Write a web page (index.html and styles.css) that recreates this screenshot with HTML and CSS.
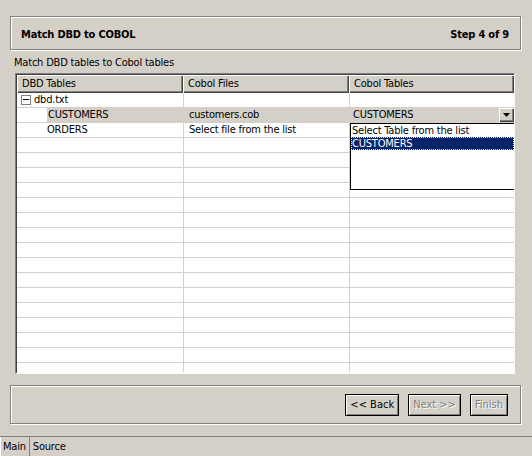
FILE: index.html
```html
<!DOCTYPE html>
<html lang="en">
<head>
  <meta charset="UTF-8">
  <title>Match DBD to COBOL</title>
  <link rel="stylesheet" href="styles.css">
</head>
<body>
  <div class="wizard">
    <div class="step-header">
      <span>Match DBD to COBOL</span>
      <span>Step 4 of 9</span>
    </div>
    <div class="subtitle">Match DBD tables to Cobol tables</div>

    <div class="table-wrap">
      <div class="table">
        <div class="head">
          <div class="hcell">DBD Tables</div>
          <div class="hcell">Cobol Files</div>
          <div class="hcell">Cobol Tables</div>
        </div>
        <div class="rows">
          <div class="row">
            <div class="cell tree"><span class="minus"></span>dbd.txt</div>
            <div class="cell"></div>
            <div class="cell"></div>
          </div>
          <div class="row active">
            <div class="cell leaf"><span class="sel">CUSTOMERS</span></div>
            <div class="cell">customers.cob</div>
            <div class="cell combo">
              <span>CUSTOMERS</span>
              <span class="combo-btn"><svg width="7" height="4" viewBox="0 0 7 4"><path d="M0 0h7L3.5 4z" fill="#000"/></svg></span>
            </div>
          </div>
          <div class="row">
            <div class="cell leaf">ORDERS</div>
            <div class="cell">Select file from the list</div>
            <div class="cell"></div>
          </div>
          <div class="row"><div class="cell"></div><div class="cell"></div><div class="cell"></div></div>
          <div class="row"><div class="cell"></div><div class="cell"></div><div class="cell"></div></div>
          <div class="row"><div class="cell"></div><div class="cell"></div><div class="cell"></div></div>
          <div class="row"><div class="cell"></div><div class="cell"></div><div class="cell"></div></div>
          <div class="row"><div class="cell"></div><div class="cell"></div><div class="cell"></div></div>
          <div class="row"><div class="cell"></div><div class="cell"></div><div class="cell"></div></div>
          <div class="row"><div class="cell"></div><div class="cell"></div><div class="cell"></div></div>
          <div class="row"><div class="cell"></div><div class="cell"></div><div class="cell"></div></div>
          <div class="row"><div class="cell"></div><div class="cell"></div><div class="cell"></div></div>
          <div class="row"><div class="cell"></div><div class="cell"></div><div class="cell"></div></div>
          <div class="row"><div class="cell"></div><div class="cell"></div><div class="cell"></div></div>
          <div class="row"><div class="cell"></div><div class="cell"></div><div class="cell"></div></div>
          <div class="row"><div class="cell"></div><div class="cell"></div><div class="cell"></div></div>
          <div class="row"><div class="cell"></div><div class="cell"></div><div class="cell"></div></div>
          <div class="row"><div class="cell"></div><div class="cell"></div><div class="cell"></div></div>
          <div class="row"><div class="cell"></div><div class="cell"></div><div class="cell"></div></div>
        </div>
        <div class="popup">
          <div class="opt">Select Table from the list</div>
          <div class="opt picked">CUSTOMERS</div>
        </div>
      </div>
    </div>

    <div class="button-bar">
      <button class="btn">&lt;&lt; Back</button>
      <button class="btn" disabled>Next &gt;&gt;</button>
      <button class="btn" disabled>Finish</button>
    </div>
  </div>

  <div class="tabs">
    <div class="tab current">Main</div>
    <div class="tab">Source</div>
  </div>
</body>
</html>
```

FILE: styles.css
```css
html, body {
  margin: 0;
  width: 532px;
  height: 456px;
  overflow: hidden;
  background: #d4d0c8;
  font-family: "DejaVu Sans Condensed", "DejaVu Sans", sans-serif;
  font-size: 11px;
  letter-spacing: -0.2px;
  color: #000;
}

.wizard {
  padding: 16px 11px 0 10px;
}

/* etched boxes */
.step-header,
.button-bar {
  border: 1px solid #808080;
  box-shadow: inset 1px 1px 0 #fff, 1px 1px 0 #fff;
}

.step-header {
  height: 30px;
  display: flex;
  justify-content: space-between;
  align-items: center;
  padding: 2px 11px 0 10px;
  font-weight: bold;
}

.subtitle {
  padding: 6px 0 0 4px;
  height: 17px;
  line-height: 14px;
}

.table-wrap {
  margin-left: 5px;
  width: 497px;
  height: 298px;
  border-top: 1px solid #808080;
  border-left: 1px solid #808080;
  border-right: 1px solid #fff;
  border-bottom: 1px solid #fff;
  box-shadow: inset 1px 1px 0 #404040;
  padding: 1px 0 0 1px;
  background: #fff;
}

.table {
  position: relative;
  height: 297px;
  overflow: hidden;
}

.head {
  display: grid;
  grid-template-columns: 166px 166px 165px;
  height: 18px;
  background: #d4d0c8;
}

.hcell {
  line-height: 17px;
  padding-left: 5px;
  box-shadow: inset 1px 1px 0 #fff, inset -1px -1px 0 #404040, inset -2px -2px 0 #808080;
  white-space: nowrap;
}

.row {
  display: grid;
  grid-template-columns: 167px 166px 165px;
  height: 14px;
  border-bottom: 1px solid #d4d0c8;
}

.cell {
  line-height: 14px;
  padding-left: 5px;
  border-right: 1px solid #d4d0c8;
  white-space: nowrap;
  position: relative;
}

.cell:last-child {
  border-right: none;
}

.row.active .cell {
  background: #d4d0c8;
}

.row.active .cell.leaf {
  background: #fff;
}

.tree {
  display: flex;
  align-items: center;
  padding-left: 4px;
}

.minus {
  width: 8px;
  height: 8px;
  border: 1px solid #808080;
  margin-right: 3px;
  position: relative;
  background: #fff;
}

.minus::after {
  content: "";
  position: absolute;
  left: 1px;
  right: 1px;
  top: 3px;
  height: 1px;
  background: #000;
}

.leaf {
  padding-left: 30px;
}

.sel {
  display: block;
  background: #d4d0c8;
  padding-left: 1px;
  margin-right: -1px;
}

.combo {
  padding-left: 3px;
}

.combo-btn {
  position: absolute;
  right: 1px;
  top: 0;
  width: 15px;
  height: 14px;
  display: flex;
  align-items: center;
  justify-content: center;
  background: #d4d0c8;
  box-shadow: inset 1px 1px 0 #fff, inset -1px -1px 0 #404040, inset -2px -2px 0 #808080;
}

.popup {
  position: absolute;
  left: 333px;
  top: 48px;
  width: 163px;
  height: 65px;
  border: 1px solid #000;
  background: #fff;
}

.opt {
  height: 13px;
  line-height: 13px;
  padding-left: 1px;
  white-space: nowrap;
}

.picked {
  background: #0a246a;
  color: #fff;
  outline: 1px dotted #f0e8b0;
  outline-offset: -1px;
}

.button-bar {
  margin-top: 11px;
  height: 37px;
  display: flex;
  justify-content: flex-end;
  align-items: center;
  gap: 9px;
  padding-right: 12px;
}

.btn {
  font: inherit;
  height: 22px;
  padding: 0 4px;
  background: #d4d0c8;
  border: 1px solid #000;
  box-shadow: inset 1px 1px 0 #fff, inset -1px -1px 0 #808080;
  color: #000;
  margin: 0;
}

.btn:disabled {
  color: #808080;
  text-shadow: 1px 1px 0 #fff;
}

.tabs {
  position: absolute;
  left: 0;
  top: 436px;
  width: 532px;
  height: 20px;
  border-top: 1px solid #808080;
  display: flex;
}

.tab {
  line-height: 19px;
  padding: 0 3px;
}

.tab.current {
  box-shadow: inset 1px 0 0 #fff, inset -1px 0 0 #808080;
  padding: 0 4px 0 3px;
}
```
